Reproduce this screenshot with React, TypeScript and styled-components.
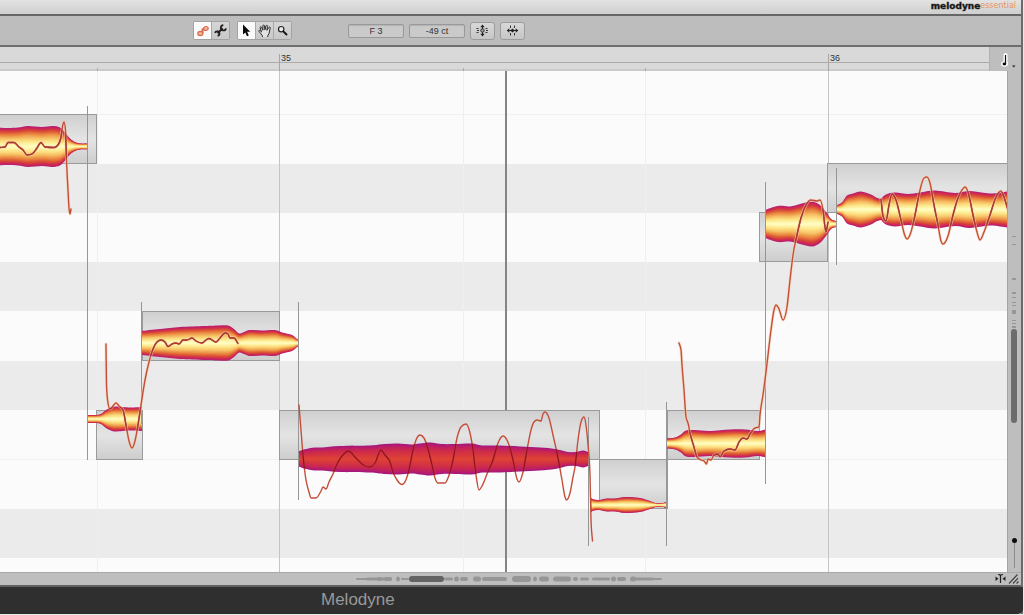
import React from "react";
import styled, { createGlobalStyle } from "styled-components";

type Point = [number, number];

const Global = createGlobalStyle`
  *, *::before, *::after { box-sizing: border-box; }
  body { margin: 0; background: #e8e8e8; font-family: "Liberation Sans", Arial, sans-serif; }
  button, input { font: inherit; color: inherit; margin: 0; padding: 0; }
  svg { display: block; }
`;

const Window = styled.div`
  display: flex;
  flex-direction: column;
  min-height: 100vh;
  padding: 0 1px 1px 0;
`;

const Frame = styled.div`
  flex: 1;
  display: flex;
  flex-direction: column;
  border-right: 2px solid #6b6b6b;
  background: #bebebe;
`;

const Header = styled.header`
  display: flex;
  justify-content: flex-end;
  align-items: flex-start;
  height: 16px;
  padding-right: 5px;
  background: linear-gradient(#e2e2e2, #cfcfcf);
  border-bottom: 2px solid #666;
`;

const Brand = styled.div`
  display: flex;
  font: bold 9px/12px "DejaVu Sans", sans-serif;
  color: #111;
  -webkit-text-stroke: 1px #1c1c1c66;
`;

const Edition = styled.span`
  font-size: 8px;
  font-weight: normal;
  color: #e8965a;
  -webkit-text-stroke: 0;
`;

const Toolbar = styled.div`
  display: flex;
  align-items: center;
  height: 31px;
  padding-left: 193px;
  background: #bdbdbd;
  border-bottom: 2px solid #6e6e6e;
`;

const ToolGroup = styled.div`
  display: flex;
  margin-right: 7px;
  border: 1px solid #a2a2a2;
  border-radius: 2px;
`;

const ToolButton = styled.button<{ $active?: boolean }>`
  display: flex;
  align-items: center;
  justify-content: center;
  width: 18px;
  height: 17px;
  border: 0;
  border-right: 1px solid #a8a8a8;
  background: ${(p) => (p.$active ? "#fafafa" : "linear-gradient(#d6d6d6, #c8c8c8)")};
  color: #222;
  &:last-child { width: 17px; border-right: 0; }
`;

const Values = styled.div`
  display: flex;
  align-items: center;
  gap: 5px;
  margin-left: 49px;
`;

const ValueField = styled.input`
  width: 56px;
  height: 14px;
  border: 1px solid #999;
  border-radius: 2px;
  background: #cacaca;
  box-shadow: inset 0 1px 1px #b4b4b4;
  text-align: center;
  font-size: 9px;
  color: #333;
`;

const ActionButton = styled.button`
  display: flex;
  align-items: center;
  justify-content: center;
  width: 25px;
  height: 18px;
  border: 1px solid #9c9c9c;
  border-radius: 3px;
  background: linear-gradient(#d8d8d8, #c6c6c6);
`;

const RulerRow = styled.div`
  display: flex;
  height: 24px;
`;

const Ruler = styled.div`
  flex: 1;
  min-width: 0;
  background: #d9d9d9;
  border-right: 1px solid #b0b0b0;
`;

const GridButton = styled.button`
  width: 31px;
  height: 24px;
  border: 0;
  background: transparent;
`;

const Editor = styled.main`
  display: flex;
  flex: 1 0 501px;
`;

const Canvas = styled.div`
  position: relative;
  flex: 1;
  min-width: 0;
  background: #fbfbfb;
`;

const Score = styled.svg`
  position: absolute;
  inset: 0;
  width: 100%;
  height: 100%;
`;

const SideBar = styled.div`
  display: flex;
  flex-direction: column;
  justify-content: space-between;
  align-items: center;
  width: 14px;
  padding-bottom: 4px;
  border-left: 1px solid #a4a4a4;
`;

const ZoomSlider = styled.input`
  appearance: none;
  writing-mode: vertical-lr;
  width: 7px;
  height: 30px;
  background: linear-gradient(#8c8c8c, #8c8c8c) center / 1px 100% no-repeat;
  &::-webkit-slider-thumb {
    appearance: none;
    width: 5px;
    height: 5px;
    border-radius: 50%;
    background: #0c0c0c;
  }
`;

const BottomBar = styled.div`
  display: flex;
  align-items: center;
  height: 15px;
  border-top: 1px solid #a9a9a9;
  border-bottom: 2px solid #606060;
`;

const Overview = styled.div`
  flex: 1;
  min-width: 0;
`;

const CornerTools = styled.div`
  display: flex;
  align-items: center;
  gap: 2px;
  padding-right: 1px;
`;

const CornerButton = styled.button`
  width: 12px;
  height: 12px;
  border: 0;
  background: transparent;
`;

const Footer = styled.footer`
  height: 27px;
  padding-left: 321px;
  background: #2f2f2f;
  border-bottom-right-radius: 5px;
  margin-right: -2px;
  color: #999;
  font-size: 17px;
  line-height: 25px;
`;

/* ---------- curve helpers ---------- */

function smooth(points: Point[], lead = "M"): string {
  let d = `${lead}${points[0][0]} ${points[0][1]}`;
  for (let i = 0; i < points.length - 1; i++) {
    const p0 = points[Math.max(i - 1, 0)];
    const p1 = points[i];
    const p2 = points[i + 1];
    const p3 = points[Math.min(i + 2, points.length - 1)];
    d += `C${p1[0] + (p2[0] - p0[0]) / 6} ${p1[1] + (p2[1] - p0[1]) / 6} ${p2[0] - (p3[0] - p1[0]) / 6} ${p2[1] - (p3[1] - p1[1]) / 6} ${p2[0]} ${p2[1]}`;
  }
  return d;
}

/* Monotone cubic: rounds off at peaks, never overshoots between samples. */
function pitchPath(p: Point[]): string {
  const n = p.length;
  const slope = (i: number) => (p[i + 1][1] - p[i][1]) / (p[i + 1][0] - p[i][0]);
  const tangent = p.map((_, i) => {
    if (i === 0) return slope(0);
    if (i === n - 1) return slope(n - 2);
    const a = slope(i - 1);
    const b = slope(i);
    if (a * b <= 0) return 0;
    const h0 = p[i][0] - p[i - 1][0];
    const h1 = p[i + 1][0] - p[i][0];
    const mean = (a * h1 + b * h0) / (h0 + h1);
    return Math.sign(a) * Math.min(2 * Math.abs(a), 2 * Math.abs(b), Math.abs(mean));
  });
  let d = `M${p[0][0]} ${p[0][1]}`;
  for (let i = 0; i < n - 1; i++) {
    const h = (p[i + 1][0] - p[i][0]) / 3;
    d += `C${p[i][0] + h} ${p[i][1] + tangent[i] * h} ${p[i + 1][0] - h} ${p[i + 1][1] - tangent[i + 1] * h} ${p[i + 1][0]} ${p[i + 1][1]}`;
  }
  return d;
}

function envelope(y: number, env: Point[], scale: number): string {
  const top = env.map(([x, h]): Point => [x, y - h * scale]);
  const bottom = env.map(([x, h]): Point => [x, y + h * scale]).reverse();
  return smooth(top) + smooth(bottom, "L") + "Z";
}

function mix(stops: [number, number[]][], t: number): string {
  let i = 0;
  while (i < stops.length - 2 && t > stops[i + 1][0]) i++;
  const [a, ca] = stops[i];
  const [b, cb] = stops[i + 1];
  const k = (t - a) / (b - a);
  return `rgb(${ca.map((c, n) => Math.round(c + (cb[n] - c) * k)).join(",")})`;
}

const warm: [number, number[]][] = [
  [0, [186, 32, 112]],
  [0.08, [206, 38, 84]],
  [0.2, [216, 72, 54]],
  [0.38, [234, 134, 62]],
  [0.6, [247, 196, 104]],
  [0.8, [254, 232, 140]],
  [1, [255, 252, 190]],
];
const selected: [number, number[]][] = [
  [0, [164, 24, 126]],
  [0.15, [188, 30, 104]],
  [0.45, [206, 44, 74]],
  [1, [222, 66, 54]],
];

interface Note {
  box: [number, number, number, number];
  y: number;
  env: Point[];
  selected?: boolean;
}

const notes: Note[] = [
  { box: [-5, 114, 101, 49], y: 146.5, env: [[-4, 19], [8, 18.5], [18, 19], [28, 20.5], [42, 19.5], [52, 20.5], [60, 19], [65, 14], [69, 9], [74, 5], [80, 3], [88, 3]] },
  { box: [96, 410, 46, 49], y: 419, env: [[87, 4], [95, 4], [101, 5], [106, 9], [111, 11.5], [116, 12.5], [130, 11.5], [142, 12]] },
  { box: [142, 311, 137, 49], y: 343, env: [[141, 12], [160, 14], [180, 16], [205, 17], [218, 17.5], [228, 17.5], [234, 14], [239, 9.5], [244, 11], [250, 13], [262, 12.5], [275, 13], [282, 10.5], [292, 8], [297, 4], [299, 3]] },
  { box: [279, 410, 320, 49], y: 459, selected: true, env: [[298, 7], [304, 9.5], [315, 11.5], [322, 11.5], [340, 13], [370, 13.5], [384, 15], [398, 15.5], [411, 14.5], [420, 15.5], [430, 16.5], [442, 15], [455, 15], [472, 15.5], [482, 13.5], [500, 13.5], [520, 12.5], [540, 11.5], [555, 10], [568, 7], [576, 7], [583, 8.5], [588, 7]] },
  { box: [599, 459, 68, 49], y: 505, env: [[591, 7], [594, 5.5], [599, 5], [607, 6.5], [615, 6.5], [625, 8], [640, 7], [650, 4], [657, 1.5], [663, 2], [667, 3.5]] },
  { box: [667, 410, 92, 49], y: 443.5, env: [[667, 5], [675, 6], [681, 9], [686, 13], [695, 13.5], [710, 12.5], [730, 14], [745, 14], [757, 12.5], [766, 14]] },
  { box: [759, 212, 68, 49], y: 224, env: [[765, 14], [778, 18], [790, 17.5], [800, 20], [812, 22.5], [820, 19], [826, 12], [831, 5], [836, 3]] },
  { box: [827, 163, 2000, 49], y: 209.5, env: [[836, 4], [842, 7], [847, 14], [853, 16], [861, 18], [871, 15], [876, 12], [881, 10.5]] },
  { box: [827, 163, 0, 0], y: 209.5, env: [[881, 10.5], [886, 15], [895, 17], [908, 15.5], [920, 17], [935, 19], [955, 16.5], [970, 18.5], [990, 16], [1007, 18]] },
];

const pitchCurves: Point[][] = [
  [[0, 147.5], [5, 147], [8, 142.5], [14, 142.5], [19, 147], [23, 150], [27, 155], [32, 154], [37, 148], [41, 142.5], [45, 147], [54, 147.5], [58, 145], [61, 137], [63, 124], [64, 122], [65.5, 130], [66.5, 160], [68, 190], [69, 208], [70, 214], [71, 209]],
  [[106, 344], [106.5, 385], [108, 403], [110, 409], [113, 406], [116, 403], [119, 406], [123, 410], [126, 425], [129, 441], [132, 448], [135, 441], [138, 425], [141, 405], [145, 380], [149, 362], [153, 349], [157, 342], [161, 340], [165, 342], [168, 346.5], [172, 344], [176, 343], [179, 344], [183, 340], [187, 340], [192, 338], [196, 341], [202, 343], [206, 340], [209, 338.5], [216, 342], [220, 338], [225, 333], [228, 334], [230, 338], [234, 338], [238, 343.5]],
  [[299, 405], [301, 430], [303, 455], [306, 480], [309, 492], [311, 498], [316, 498], [321, 491], [323, 487], [326, 489], [329, 482], [333, 474], [337, 464], [342, 456], [349, 451], [354, 456], [359, 461], [365, 466], [370, 467], [375, 463], [381, 450], [385, 455], [390, 462], [393, 472], [397, 480], [402, 484.5], [407, 477], [410, 465], [413, 450], [416, 440], [420, 435], [424, 438], [428, 449], [432, 465], [435, 478], [438, 483], [445, 483], [448, 478], [453, 460], [457, 438], [461, 427], [466, 424], [470, 433], [473, 450], [476, 475], [479, 490], [482, 486], [487, 474], [493, 460], [498, 443], [503, 436], [509, 445], [513, 460], [517, 479], [519, 482], [523, 472], [527, 450], [531, 430], [534, 422], [537, 420], [541, 421], [543, 414], [545, 412], [549, 418], [553, 435], [558, 458], [562, 480], [565, 497], [566.5, 500], [570, 493], [573, 477], [575, 467], [578, 440], [581, 422], [584, 417], [586, 425], [588, 445], [590, 475], [591, 520], [592.5, 541]],
  [[679, 343], [681, 350], [682, 365], [684, 390], [686, 417], [688, 423], [690, 433], [694, 447], [697, 457], [701, 460], [704, 461], [706.5, 464], [708, 459], [711, 460], [714, 455], [718, 454], [720, 457], [724, 451], [730, 449], [735, 450], [739, 442], [743, 438], [747, 439], [750, 434], [755, 428], [759, 427], [760, 415], [763, 395], [766, 372], [771, 330], [774, 310], [776, 305], [779, 309], [783, 320], [787, 307], [790, 280], [793, 255], [797, 235], [801, 218], [806, 205], [811, 200], [817, 201], [820, 200], [823, 210], [825, 227], [826, 232], [828, 222]],
  [[881, 199], [883, 216], [886, 221], [889, 205], [892, 194], [896, 200], [901, 220], [905, 236], [907, 239], [911, 232], [915, 215], [920, 190], [924, 178], [927, 177], [930, 183], [934, 205], [938, 225], [941, 241], [943, 244], [948, 236], [953, 215], [958, 198], [962, 190], [965, 187], [968, 192], [973, 215], [977, 232], [980, 240], [984, 232], [990, 215], [996, 197], [1001, 191], [1004, 197], [1008, 210]],
];

/* x, top, bottom of the lines that divide neighbouring notes */
const separators: [number, number, number][] = [
  [87, 106, 460], [141, 302, 424], [298, 302, 500], [588, 417, 546], [666, 402, 546], [765, 182, 484], [836, 168, 265],
];

const darkLanes: [number, number][] = [[164, 49], [262, 49], [361, 49], [509, 49]];

function NoteBlob({ note, id }: { note: Note; id: string }) {
  const steps = 18;
  const stops = note.selected ? selected : warm;
  return (
    <g>
      <clipPath id={id}>
        <path d={envelope(note.y, note.env, 1)} />
      </clipPath>
      {Array.from({ length: steps }, (_, i) => (
        <path key={i} d={envelope(note.y, note.env, 1 - i / steps)} fill={mix(stops, i / (steps - 1))} />
      ))}
    </g>
  );
}

function NoteCanvas() {
  return (
    <Score role="img" aria-label="Note editor">
      <defs>
        <linearGradient id="noteBox" x1="0" y1="0" x2="0" y2="1">
          <stop offset="0" stopColor="#cfcfcf" />
          <stop offset=".5" stopColor="#e4e4e4" />
          <stop offset="1" stopColor="#cdcdcd" />
        </linearGradient>
      </defs>
      <g transform="translate(0 -71)">
        {darkLanes.map(([y, h]) => (
          <rect key={y} x="0" y={y} width="100%" height={h} fill="#ebebeb" />
        ))}
        {[114, 459].map((y) => (
          <rect key={y} x="0" y={y} width="100%" height="1" fill="#f0f0f0" />
        ))}
        {[97, 463, 645].map((x) => (
          <rect key={x} x={x} y="71" width="1" height="100%" fill="#efefef" />
        ))}
        {[279, 828].map((x) => (
          <rect key={x} x={x} y="71" width="1" height="100%" fill="#c4c4c4" />
        ))}
        <rect x="505" y="71" width="2" height="100%" fill="#848484" />
        {notes.map((n, i) =>
          n.box[2] ? (
            <rect key={i} x={n.box[0] + 0.5} y={n.box[1] + 0.5} width={n.box[2]} height={n.box[3]} fill="url(#noteBox)" stroke="#9a9a9a" />
          ) : null
        )}
        {notes.map((n, i) => (
          <NoteBlob key={i} note={n} id={`blob${i}`} />
        ))}
        {separators.map(([x, a, b]) => (
          <rect key={x} x={x} y={a} width="1" height={b - a} fill="#969696" />
        ))}
        {pitchCurves.map((c, i) => (
          <g key={i} fill="none" strokeLinecap="round" strokeLinejoin="round">
            {i !== 2 && <path d={pitchPath(c)} stroke="#f6d3b0" strokeWidth="3" opacity=".65" />}
            <path d={pitchPath(c)} stroke="#c44e3a" strokeWidth="1.4" />
          </g>
        ))}
        {notes.map((n, i) => (
          <g key={i} clipPath={`url(#blob${i})`} fill="none" stroke={n.selected ? "#941022" : "#a83a34"} strokeWidth="1.3">
            {pitchCurves.map((c, k) => (
              <path key={k} d={pitchPath(c)} />
            ))}
          </g>
        ))}
      </g>
    </Score>
  );
}

/* ---------- icons ---------- */

const BlobIcon = () => (
  <svg width="12" height="12" viewBox="0 0 12 12">
    <path d="M3 8.500Q6.500 8.500 5.500 6T9 3.500" stroke="#d86a50" strokeWidth="2" fill="none" />
    <ellipse cx="3.300" cy="8.500" rx="2.500" ry="2.100" fill="#f3b48e" stroke="#d86a50" strokeWidth="1.200" />
    <ellipse cx="8.900" cy="3.500" rx="2.300" ry="2" fill="#f3b48e" stroke="#d86a50" strokeWidth="1.200" />
  </svg>
);

const WrenchIcon = () => (
  <svg width="13" height="13" viewBox="0 0 13 13">
    <path d="M3.600 9.400 8.600 4.200" stroke="#222" strokeWidth="2" />
    <path d="M9.300 1.200A2.600 2.600 0 1 0 12 4.300M1 8.900A2.300 2.300 0 1 1 3.600 11.900" stroke="#222" strokeWidth="1.800" fill="none" />
  </svg>
);

const ArrowIcon = () => (
  <svg width="9" height="13" viewBox="0 0 9 13">
    <path d="M1 .5V10.500L3.300 8.400 5 12.300 6.800 11.500 5.100 7.800H8.200Z" fill="#080808" />
  </svg>
);

const HandIcon = () => (
  <svg width="14" height="14" viewBox="0 0 14 14">
    <path
      d="M4.500 13 4.300 11.500C3.200 10.200 2 8.600 1 7.400.4 6.500 1.500 5.900 2.200 6.600L3.500 7.900 2.200 3.700C2 2.600 3.200 2.300 3.600 3.300L4.900 6.200 4.900 1.900C5 .8 6.400.8 6.500 1.900L6.900 5.900 8 1.900C8.400.9 9.600 1.200 9.500 2.300L8.900 6.300 10.900 3.400C11.500 2.600 12.600 3.200 12.200 4.100 11.400 6 11.700 8 11 9.600L9.800 11.500V13"
      fill="#e2e2e2"
      stroke="#2a2a2a"
      strokeLinejoin="round"
    />
  </svg>
);

const MagnifierIcon = () => (
  <svg width="11" height="11" viewBox="0 0 11 11">
    <circle cx="4.200" cy="4.200" r="2.700" fill="#ececec" stroke="#222" strokeWidth="1.200" />
    <path d="M6.300 6.300 9.500 9.500" stroke="#111" strokeWidth="1.900" strokeLinecap="round" />
  </svg>
);

const PitchSnapIcon = () => (
  <svg width="13" height="13" viewBox="0 0 13 13" stroke="#222" fill="none">
    <path d="M6.500 1V12" />
    <circle cx="6.500" cy="6.500" r="1.700" fill="#aaa" />
    <path d="M4.300 3.200 6.500.6 8.700 3.200ZM4.300 9.800 6.500 12.400 8.700 9.800Z" fill="#222" stroke="none" />
    <path d="M.5 4.500H3.500M9.500 4.500H12.500M.5 8.500H3.500M9.500 8.500H12.500M1 6.500H3M10 6.500H12" strokeWidth=".9" strokeDasharray="2 1" />
  </svg>
);

const TimeSnapIcon = () => (
  <svg width="13" height="13" viewBox="0 0 13 13" stroke="#222" fill="none">
    <path d="M1 6.500H12" />
    <path d="M3.300 4.300.8 6.500 3.300 8.700ZM9.700 4.300 12.200 6.500 9.700 8.700ZM4.200 6.500 6.500 4.500 8.800 6.500 6.500 8.500Z" fill="#222" stroke="none" />
    <path d="M4.500 1.500V4M8.500 1.500V4M4.500 9V11.500M8.500 9V11.500" strokeWidth=".9" />
  </svg>
);

const NoteValueIcon = () => (
  <svg width="31" height="24" viewBox="0 0 31 24">
    <path d="M15.500 8V17" stroke="#fff" strokeWidth="4" strokeLinecap="round" />
    <ellipse cx="14.500" cy="17" rx="3.400" ry="2.800" fill="#fff" />
    <path d="M15.500 8V17" stroke="#111" strokeWidth="1.200" />
    <ellipse cx="14.400" cy="17" rx="1.900" ry="1.400" fill="#111" />
    <path d="M22 18.500H25.500L23.750 20.500Z" fill="#222" />
  </svg>
);

const AutoScrollIcon = () => (
  <svg width="12" height="12" viewBox="0 0 12 12">
    <path d="M6.500 2V10M4 1.500Q6.500 1.500 6.500 3 6.500 1.500 9 1.500" stroke="#222" fill="none" strokeWidth="1.200" />
    <path d="M1.500 3.500 4.500 5.700 1.500 8ZM11.500 3.500 8.500 5.700 11.500 8Z" fill="#222" />
  </svg>
);

const ResizeIcon = () => (
  <svg width="12" height="12" viewBox="0 0 12 12">
    <path d="M1 10.500 9.500 1.500M5 10.500 10 5.200M8.500 10.500 10.500 8.500" stroke="#444" strokeWidth="1.200" />
  </svg>
);

/* x, width, height, of the note traces in the horizontal overview */
const overviewMarks: [number, number, number][] = [
  [356, 22, 2], [366, 26, 3], [377, 5, 4], [384, 8, 4], [396, 4, 5], [401, 8, 2], [444, 9, 3], [454, 5, 5], [460, 8, 4], [473, 8, 5],
  [482, 25, 4], [512, 19, 6], [533, 4, 5], [539, 10, 5], [553, 18, 5], [573, 5, 4], [580, 9, 3], [592, 18, 3], [611, 5, 5], [617, 9, 4], [630, 6, 5], [634, 20, 3], [651, 11, 2],
];
/* y, height, width in the vertical overview */
const sideMarks: [number, number, number][] = [
  [165, 1, 4], [173, 1, 4], [207, 2, 4], [221, 2, 4], [226, 1, 4], [231, 1, 4], [234, 1, 4], [239, 4, 4], [249, 1, 4], [252, 1, 4], [255, 2, 4],
];

export default function App() {
  return (
    <Window>
      <Global />
      <Frame>
        <Header>
          <Brand>
            melodyne<Edition>essential</Edition>
          </Brand>
        </Header>
        <Toolbar>
          <ToolGroup>
            <ToolButton $active aria-label="Show blobs"><BlobIcon /></ToolButton>
            <ToolButton aria-label="Settings"><WrenchIcon /></ToolButton>
          </ToolGroup>
          <ToolGroup>
            <ToolButton $active aria-label="Main tool"><ArrowIcon /></ToolButton>
            <ToolButton aria-label="Scroll tool"><HandIcon /></ToolButton>
            <ToolButton aria-label="Zoom tool"><MagnifierIcon /></ToolButton>
          </ToolGroup>
          <Values>
            <ValueField aria-label="Note" defaultValue="F 3" />
            <ValueField aria-label="Pitch deviation" defaultValue="-49 ct" />
            <ActionButton aria-label="Correct pitch"><PitchSnapIcon /></ActionButton>
            <ActionButton aria-label="Quantize time"><TimeSnapIcon /></ActionButton>
          </Values>
        </Toolbar>
        <RulerRow>
          <Ruler>
            <svg width="100%" height="24">
              <rect y="15" width="100%" height="1" fill="#ababab" />
              <rect y="22" width="100%" height="2" fill="#cbcbcb" />
              {[97, 463, 645].map((x) => (
                <rect key={x} x={x} y="21" width="1" height="3" fill="#aaa" />
              ))}
              {[279, 828].map((x, i) => (
                <g key={x}>
                  <rect x={x} y="7" width="1" height="17" fill="#a6a6a6" />
                  <text x={x + 2} y="14" fontSize="9" fill="#333">{35 + i}</text>
                </g>
              ))}
            </svg>
          </Ruler>
          <GridButton aria-label="Grid"><NoteValueIcon /></GridButton>
        </RulerRow>
        <Editor>
          <Canvas>
            <NoteCanvas />
          </Canvas>
          <SideBar>
            <svg width="13" height="356" viewBox="0 0 13 356">
              {sideMarks.map(([y, h, w]) => (
                <rect key={y} x="4" y={y} width={w} height={h} fill="#979797" />
              ))}
              <rect x="3" y="258" width="6" height="94" rx="3" fill="#6c6c6c" />
            </svg>
            <ZoomSlider type="range" aria-label="Zoom" defaultValue={0} />
          </SideBar>
        </Editor>
        <BottomBar>
          <Overview>
            <svg width="100%" height="12">
              {overviewMarks.map(([x, w, h]) => (
                <rect key={x} x={x} y={6 - h / 2} width={w} height={h} rx={h / 2} fill="#969696" />
              ))}
              <rect x="409" y="3" width="35" height="6" rx="3" fill="#636363" />
            </svg>
          </Overview>
          <CornerTools>
            <CornerButton aria-label="Auto scroll"><AutoScrollIcon /></CornerButton>
            <CornerButton aria-label="Resize"><ResizeIcon /></CornerButton>
          </CornerTools>
        </BottomBar>
        <Footer>Melodyne</Footer>
      </Frame>
    </Window>
  );
}
